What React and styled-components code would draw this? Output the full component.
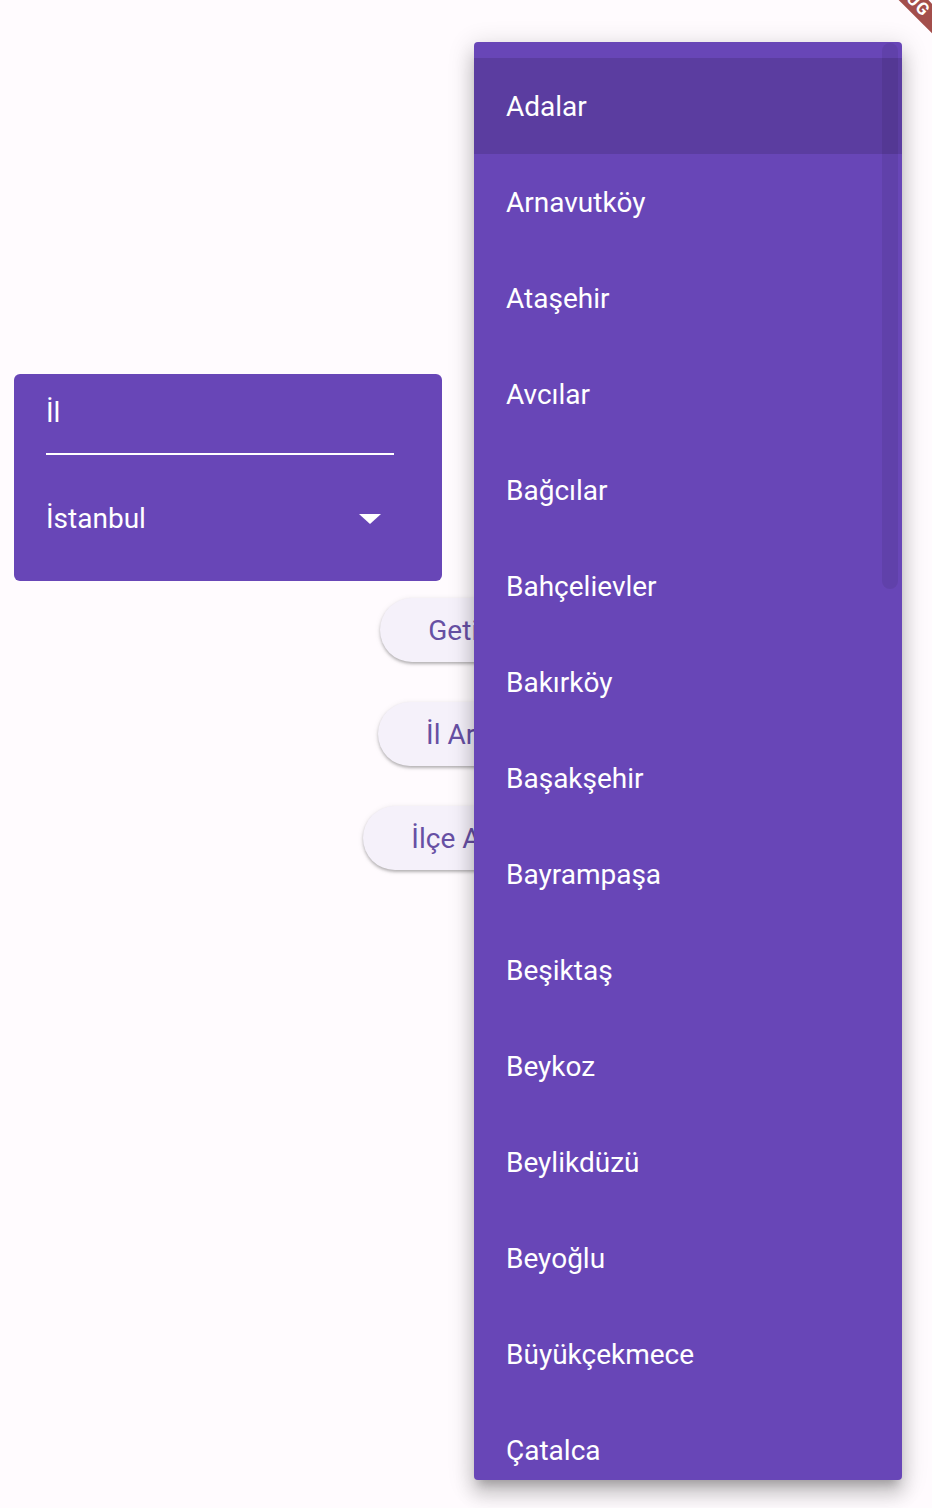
import React from "react";
import styled, { createGlobalStyle } from "styled-components";

const districts = [
  "Adalar",
  "Arnavutköy",
  "Ataşehir",
  "Avcılar",
  "Bağcılar",
  "Bahçelievler",
  "Bakırköy",
  "Başakşehir",
  "Bayrampaşa",
  "Beşiktaş",
  "Beykoz",
  "Beylikdüzü",
  "Beyoğlu",
  "Büyükçekmece",
  "Çatalca",
];

const buttons = ["Getir", "İl Ara", "İlçe Ara"];

export default function App() {
  return (
    <Screen>
      <GlobalStyle />
      <Card>
        <Label>İl</Label>
        <Underline />
        <ValueRow>
          <Value>İstanbul</Value>
          <Arrow />
        </ValueRow>
      </Card>
      <ButtonColumn>
        {buttons.map((b) => (
          <PillButton key={b}>{b}</PillButton>
        ))}
      </ButtonColumn>

      <Menu>
        <Scrollbar />
        {districts.map((d, i) => (
          <MenuItem key={d} selected={i === 0}>
            {d}
          </MenuItem>
        ))}
      </Menu>

      <DebugBanner>DEBUG</DebugBanner>
    </Screen>
  );
}

const GlobalStyle = createGlobalStyle`
  body {
    margin: 0;
    background: #fffbfe;
    font-family: Roboto, "Noto Sans", sans-serif;
  }
`;

const Screen = styled.div`
  position: relative;
  width: 932px;
  height: 1508px;
  overflow: hidden;
  background: #fffbfe;
  padding-top: 374px;
  box-sizing: border-box;
`;

const Card = styled.div`
  width: 428px;
  margin-left: 14px;
  box-sizing: border-box;
  padding: 22px 48px 45px 32px;
  background: #6846b7;
  border-radius: 6px;
  color: #ffffff;
`;

const Label = styled.div`
  font-size: 28px;
  line-height: 34px;
`;

const Underline = styled.div`
  margin-top: 23px;
  height: 2px;
  background: #ffffff;
`;

const ValueRow = styled.div`
  margin-top: 47px;
  display: flex;
  align-items: center;
  justify-content: space-between;
  padding-right: 13px;
`;

const Value = styled.div`
  font-size: 28px;
  line-height: 34px;
`;

const Arrow = styled.div`
  width: 0;
  height: 0;
  border-left: 11px solid transparent;
  border-right: 11px solid transparent;
  border-top: 10px solid #ffffff;
`;

const ButtonColumn = styled.div`
  display: flex;
  flex-direction: column;
  align-items: center;
  gap: 40px;
  margin-top: 17px;
  padding-right: 16px;
`;

const PillButton = styled.button`
  height: 64px;
  padding: 0 48px;
  border: none;
  border-radius: 32px;
  background: #f5f1fa;
  color: #6750a4;
  font-family: Roboto, sans-serif;
  font-size: 28px;
  box-shadow: 0 2px 3px rgba(0, 0, 0, 0.25), 0 1px 6px rgba(0, 0, 0, 0.08);
`;

const Menu = styled.div`
  position: absolute;
  left: 474px;
  top: 42px;
  width: 428px;
  height: 1438px;
  box-sizing: border-box;
  padding-top: 16px;
  background: #6846b7;
  border-radius: 4px;
  overflow: hidden;
  box-shadow: 0 9px 9px -5px rgba(0, 0, 0, 0.2),
    0 14px 18px 2px rgba(0, 0, 0, 0.14), 0 5px 25px 4px rgba(0, 0, 0, 0.12);
`;

const Scrollbar = styled.div`
  position: absolute;
  top: 1px;
  right: 4px;
  width: 16px;
  height: 546px;
  border-radius: 8px;
  background: rgba(0, 0, 0, 0.07);
`;

const MenuItem = styled.div`
  height: 96px;
  box-sizing: border-box;
  display: flex;
  align-items: center;
  padding: 2px 0 0 32px;
  color: #ffffff;
  font-size: 28px;
  line-height: 34px;
  background: ${({ selected }) => (selected ? "rgba(0, 0, 0, 0.12)" : "transparent")};
`;

const DebugBanner = styled.div`
  position: absolute;
  left: 806px;
  top: -18px;
  width: 200px;
  height: 21px;
  transform: rotate(45deg);
  background: #a34e4b;
  color: #ffffff;
  font-size: 17px;
  font-weight: 700;
  line-height: 21px;
  text-align: center;
  letter-spacing: 1px;
`;
